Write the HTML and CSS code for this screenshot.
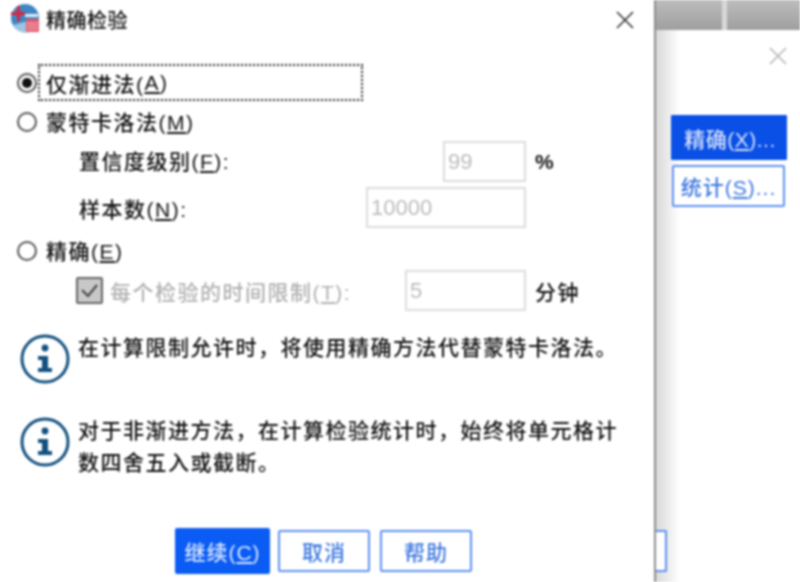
FILE: index.html
```html
<!DOCTYPE html>
<html lang="zh-CN">
<head>
  <meta charset="UTF-8">
  <meta name="viewport" content="width=device-width, initial-scale=1.0">
  <title>精确检验</title>
  <link rel="stylesheet" href="styles.css">
</head>
<body>
  <div class="screen">
    <div class="dialog">
      <div class="titlebar">
        <svg class="app-icon" width="30" height="30" viewBox="0 0 30 30">
          <circle cx="15" cy="15" r="14" fill="#3f86c4"/>
          <path d="M3 22a14 14 0 0 0 19 6l-4-10z" fill="#9cc4e4"/>
          <path d="M15 11h13v3H15z" fill="#e4eef7"/>
          <path d="M7 3v6H1v3h6v6h3v-6h5V9h-5V3z" fill="#d8263a"/>
          <rect x="16" y="16" width="13" height="13" fill="#e2596c"/>
          <path d="M17 20h11M17 23h11M17 26h11" stroke="#f6c6cd" stroke-width="1"/>
        </svg>
        <span class="title">精确检验</span>
        <svg class="close" width="20" height="20" viewBox="0 0 20 20">
          <path d="M2 2l16 16M18 2L2 18" stroke="#333" stroke-width="1.6" fill="none"/>
        </svg>
      </div>

      <div class="body">
        <div class="row row-first">
          <span class="radio checked"></span>
          <span class="focus-box">仅渐进法(<u>A</u>)</span>
        </div>
        <div class="row row-radio">
          <span class="radio"></span>
          <span class="radio-label">蒙特卡洛法(<u>M</u>)</span>
        </div>
        <div class="sub">
          <label class="sub-label sub-label-up">置信度级别(<u>F</u>):</label>
          <input class="field field-short" type="text" value="99" disabled>
          <span class="unit unit-bold">%</span>
        </div>
        <div class="sub sub-gap">
          <label class="sub-label">样本数(<u>N</u>):</label>
          <input class="field field-wide" type="text" value="10000" disabled>
        </div>
        <div class="row row-radio row-exact">
          <span class="radio"></span>
          <span class="radio-label">精确(<u>E</u>)</span>
        </div>
        <div class="sub sub-check">
          <label class="check-label">
            <span class="checkbox">
              <svg width="19" height="15" viewBox="0 0 19 15"><path d="M2 7l6 6L17 2" stroke="#444" stroke-width="2" fill="none"/></svg>
            </span>
            <span class="muted">每个检验的时间限制(<u>T</u>):</span>
          </label>
          <input class="field field-mid" type="text" value="5" disabled>
          <span class="unit">分钟</span>
        </div>

        <div class="info info-first">
          <svg class="info-icon" width="50" height="50" viewBox="0 0 50 50">
            <circle cx="25" cy="25" r="23" fill="none" stroke="#12507f" stroke-width="3"/>
            <circle cx="25" cy="14" r="3.4" fill="#12507f"/>
            <path d="M18 22h10v12h4v4H18v-4h4V26h-4z" fill="#12507f"/>
          </svg>
          <p class="info-text">在计算限制允许时，将使用精确方法代替蒙特卡洛法。</p>
        </div>
        <div class="info info-second">
          <svg class="info-icon" width="50" height="50" viewBox="0 0 50 50">
            <circle cx="25" cy="25" r="23" fill="none" stroke="#12507f" stroke-width="3"/>
            <circle cx="25" cy="14" r="3.4" fill="#12507f"/>
            <path d="M18 22h10v12h4v4H18v-4h4V26h-4z" fill="#12507f"/>
          </svg>
          <p class="info-text">对于非渐进方法，在计算检验统计时，始终将单元格计<br>数四舍五入或截断。</p>
        </div>
      </div>

      <div class="footer">
        <button class="btn btn-primary btn-continue">继续(<u>C</u>)</button>
        <button class="btn btn-cancel">取消</button>
        <button class="btn btn-help">帮助</button>
      </div>
    </div>

    <div class="behind">
      <div class="behind-top"><span class="behind-split"></span></div>
      <div class="behind-body">
        <svg class="behind-close" width="20" height="20" viewBox="0 0 20 20">
          <path d="M2 2l16 16M18 2L2 18" stroke="#b4b4b4" stroke-width="1.6" fill="none"/>
        </svg>
        <button class="side-btn side-primary">精确(<u>X</u>)...</button>
        <button class="side-btn side-plain">统计(<u>S</u>)...</button>
        <span class="behind-stub"></span>
      </div>
    </div>
  </div>
</body>
</html>
```

FILE: styles.css
```css
html, body {
  margin: 0;
  height: 100%;
  overflow: hidden;
}
body {
  font-family: "Liberation Sans", "Noto Sans CJK SC", sans-serif;
  font-size: 21px;
  font-weight: 500;
  letter-spacing: 1.5px;
  color: #111;
  background: white;
}
.screen {
  display: flex;
  height: 582px;
  filter: blur(0.8px);
}

/* main dialog */
.dialog {
  width: 654px;
  height: 582px;
  box-sizing: content-box;
  border-right: 2px solid #8c8c8c;
  background: white;
  display: flex;
  flex-direction: column;
  flex-shrink: 0;
}
.titlebar {
  height: 40px;
  display: flex;
  align-items: center;
  padding: 0 19px 4px 10px;
  box-sizing: border-box;
}
.title {
  margin: 2px 0 0 6px;
  font-size: 20px;
  letter-spacing: 0.5px;
}
.close {
  margin: 4px 0 0 auto;
}
.body {
  padding: 24px 0 0 17px;
  flex: 1;
}
.row {
  display: flex;
  align-items: center;
}
.row-first {
  height: 37px;
}
.row-radio {
  height: 38px;
  margin-top: 2px;
}
.row-exact {
  margin-top: 4px;
}
.radio {
  width: 16px;
  height: 16px;
  border: 2px solid #555;
  border-radius: 50%;
  flex-shrink: 0;
  position: relative;
}
.radio.checked::after {
  content: "";
  position: absolute;
  top: 3px;
  left: 3px;
  width: 10px;
  height: 10px;
  border-radius: 50%;
  background: #111;
}
.focus-box {
  margin-left: 1px;
  width: 325px;
  height: 37px;
  box-sizing: border-box;
  border: 2px dotted #222;
  padding-left: 6px;
  display: flex;
  align-items: center;
}
.radio-label {
  margin-left: 9px;
  padding-bottom: 2px;
}
.sub {
  display: grid;
  grid-template-columns: 1fr auto 54px;
  align-items: center;
  width: 501px;
  margin-left: 62px;
  height: 41px;
}
.sub-gap {
  margin-top: 5px;
}
.sub-label {
  grid-column: 1;
}
.sub-label-up {
  margin-bottom: 4px;
}
.field {
  grid-column: 2;
  height: 41px;
  box-sizing: border-box;
  border: 2px solid #dcdcdc;
  background: white;
  padding: 0 0 0 3px;
  margin: 0;
  font-family: "Liberation Sans", sans-serif;
  font-size: 22px;
  color: #bbb;
  letter-spacing: 0;
}
.field:disabled {
  color: #bbb;
  background: white;
}
.field-short {
  width: 83px;
}
.field-wide {
  width: 160px;
}
.field-mid {
  width: 121px;
}
.unit {
  grid-column: 3;
  padding-left: 9px;
}
.unit-bold {
  font-weight: 700;
  letter-spacing: 0;
}
.sub-check {
  margin-left: 59px;
  width: 504px;
}
.check-label {
  grid-column: 1;
  display: flex;
  align-items: center;
}
.checkbox {
  width: 27px;
  height: 27px;
  box-sizing: border-box;
  border: 2px solid #666;
  border-radius: 2px;
  background: #c8c8c8;
  display: flex;
  align-items: center;
  justify-content: center;
}
.muted {
  margin-left: 7px;
  color: #b0b0b0;
}
.info {
  display: flex;
  align-items: flex-start;
  padding-left: 3px;
}
.info-first {
  margin-top: 23px;
}
.info-second {
  margin-top: 33px;
}
.info-icon {
  flex-shrink: 0;
}
.info-text {
  margin: -2px 0 0 8px;
  line-height: 32px;
  white-space: nowrap;
}

/* bottom buttons */
.footer {
  display: flex;
  align-items: center;
  padding: 0 0 8px 175px;
}
.btn {
  height: 42px;
  width: 92px;
  box-sizing: border-box;
  border: 2px solid #5c90f2;
  border-radius: 2px;
  background: white;
  color: #3d78e0;
  font: inherit;
  letter-spacing: 1px;
  padding: 0;
}
.btn-primary {
  width: 95px;
  height: 46px;
  background: #0a5cf5;
  border-color: #0a5cf5;
  color: #dbe7ff;
}
.btn-cancel {
  margin-left: 8px;
}
.btn-help {
  margin-left: 10px;
}

/* window behind the dialog */
.behind {
  flex: 1;
  display: flex;
  flex-direction: column;
  background: linear-gradient(to right, #d9d9d9, white 24px);
}
.behind-top {
  height: 30px;
  background: linear-gradient(#bdbdbd, #9f9f9f);
  display: flex;
  padding-left: 66px;
}
.behind-split {
  width: 5px;
  background: #d8d8d8;
}
.behind-body {
  flex: 1;
  display: flex;
  flex-direction: column;
  padding-left: 15px;
  position: relative;
}
.behind-close {
  margin: 16px 0 0 97px;
}
.side-btn {
  box-sizing: border-box;
  font: inherit;
  padding: 0;
  letter-spacing: 1px;
  white-space: nowrap;
}
.side-primary {
  width: 116px;
  height: 45px;
  margin-top: 49px;
  padding-left: 2px;
  letter-spacing: 0.5px;
  background: #0a50e6;
  border: none;
  border-radius: 1px;
  color: #d4e0fb;
}
.side-plain {
  width: 113px;
  height: 42px;
  margin: 5px 0 0 1px;
  background: white;
  border: 2px solid #5c90f2;
  border-radius: 2px;
  color: #3d78e0;
}
.behind-stub {
  position: absolute;
  left: 0;
  top: 500px;
  width: 11px;
  height: 42px;
  box-sizing: border-box;
  border: 2px solid #5c90f2;
  border-left: none;
  border-radius: 0 2px 2px 0;
  background: white;
}
```
